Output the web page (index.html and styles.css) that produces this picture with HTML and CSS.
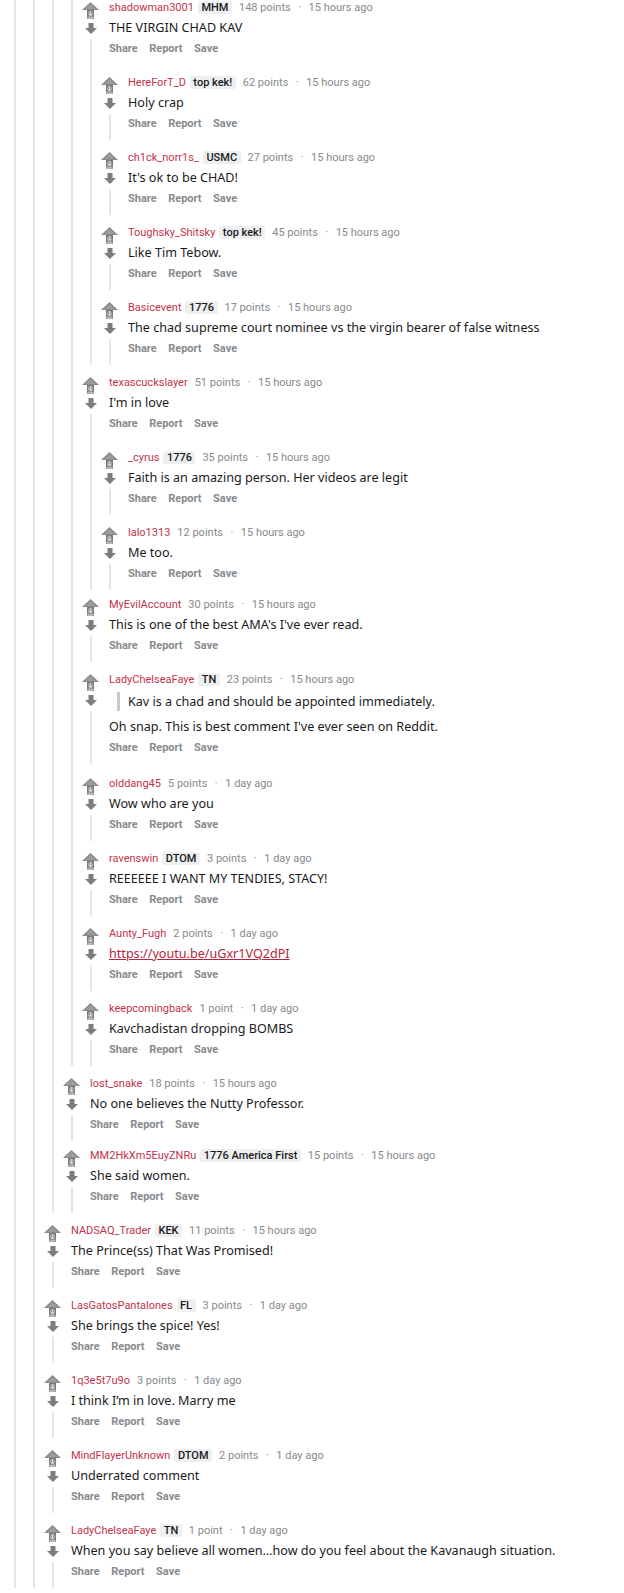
FILE: index.html
```html
<!DOCTYPE html>
<html lang="en">
<head>
  <meta charset="UTF-8" />
  <title>Comments</title>
  <link rel="stylesheet" href="styles.css">
</head>
<body>

<svg class="defs" width="0" height="0">
  <symbol id="up" viewBox="0 0 17 17">
    <polygon points="8.5,0 17,8 0,8" fill="#8a8a8a" />
    <polygon points="8.5,2 14,7 3,7" fill="#9c9c9c" />
    <rect x="5" y="8" width="7" height="9" fill="#7a7a7a" />
    <ellipse cx="8.5" cy="11.5" rx="2.2" ry="2.6" fill="#d4d4d4" />
    <rect x="7" y="10.6" width="1" height="1" fill="#555" />
    <rect x="9.2" y="10.6" width="1" height="1" fill="#555" />
    <rect x="5.5" y="14.5" width="6" height="2.5" fill="#b5b5b5" />
  </symbol>
  <symbol id="down" viewBox="0 0 12 11">
    <path d="M3.5 0h5v5h3.5l-6 6-6-6h3.5z" fill="#7d7d7d" />
  </symbol>
</svg>

<div class="thread">
  <div class="comment cut">
    <div class="rail"><div class="line"></div></div>
    <div class="content">
      <div class="children">

        <div class="comment cut">
          <div class="rail"><div class="line"></div></div>
          <div class="content">
            <div class="children">

              <div class="comment cut">
                <div class="rail"><div class="line"></div></div>
                <div class="content">
                  <div class="children">

                    <div class="comment cut">
                      <div class="rail"><div class="line"></div></div>
                      <div class="content">
                        <div class="children">

                          <!-- shadowman3001 -->
                          <div class="comment">
                            <div class="rail">
                              <svg class="up"><use href="#up"></use></svg>
                              <svg class="down"><use href="#down"></use></svg>
                              <div class="line"></div>
                            </div>
                            <div class="content">
                              <div class="meta"><span class="author">shadowman3001</span><span class="flair">MHM</span><span class="score">148 points</span><span class="dot">·</span><span>15 hours ago</span></div>
                              <div class="body"><p>THE VIRGIN CHAD KAV</p></div>
                              <div class="actions"><span>Share</span><span>Report</span><span>Save</span></div>
                              <div class="children">

                                <div class="comment">
                                  <div class="rail">
                                    <svg class="up"><use href="#up"></use></svg>
                                    <svg class="down"><use href="#down"></use></svg>
                                    <div class="line"></div>
                                  </div>
                                  <div class="content">
                                    <div class="meta"><span class="author">HereForT_D</span><span class="flair">top kek!</span><span class="score">62 points</span><span class="dot">·</span><span>15 hours ago</span></div>
                                    <div class="body"><p>Holy crap</p></div>
                                    <div class="actions"><span>Share</span><span>Report</span><span>Save</span></div>
                                  </div>
                                </div>

                                <div class="comment">
                                  <div class="rail">
                                    <svg class="up"><use href="#up"></use></svg>
                                    <svg class="down"><use href="#down"></use></svg>
                                    <div class="line"></div>
                                  </div>
                                  <div class="content">
                                    <div class="meta"><span class="author">ch1ck_norr1s_</span><span class="flair">USMC</span><span class="score">27 points</span><span class="dot">·</span><span>15 hours ago</span></div>
                                    <div class="body"><p>It's ok to be CHAD!</p></div>
                                    <div class="actions"><span>Share</span><span>Report</span><span>Save</span></div>
                                  </div>
                                </div>

                                <div class="comment">
                                  <div class="rail">
                                    <svg class="up"><use href="#up"></use></svg>
                                    <svg class="down"><use href="#down"></use></svg>
                                    <div class="line"></div>
                                  </div>
                                  <div class="content">
                                    <div class="meta"><span class="author">Toughsky_Shitsky</span><span class="flair">top kek!</span><span class="score">45 points</span><span class="dot">·</span><span>15 hours ago</span></div>
                                    <div class="body"><p>Like Tim Tebow.</p></div>
                                    <div class="actions"><span>Share</span><span>Report</span><span>Save</span></div>
                                  </div>
                                </div>

                                <div class="comment">
                                  <div class="rail">
                                    <svg class="up"><use href="#up"></use></svg>
                                    <svg class="down"><use href="#down"></use></svg>
                                    <div class="line"></div>
                                  </div>
                                  <div class="content">
                                    <div class="meta"><span class="author">Basicevent</span><span class="flair">1776</span><span class="score">17 points</span><span class="dot">·</span><span>15 hours ago</span></div>
                                    <div class="body"><p>The chad supreme court nominee vs the virgin bearer of false witness</p></div>
                                    <div class="actions"><span>Share</span><span>Report</span><span>Save</span></div>
                                  </div>
                                </div>

                              </div>
                            </div>
                          </div>

                          <!-- texascuckslayer -->
                          <div class="comment">
                            <div class="rail">
                              <svg class="up"><use href="#up"></use></svg>
                              <svg class="down"><use href="#down"></use></svg>
                              <div class="line"></div>
                            </div>
                            <div class="content">
                              <div class="meta"><span class="author">texascuckslayer</span><span class="score">51 points</span><span class="dot">·</span><span>15 hours ago</span></div>
                              <div class="body"><p>I'm in love</p></div>
                              <div class="actions"><span>Share</span><span>Report</span><span>Save</span></div>
                              <div class="children">

                                <div class="comment">
                                  <div class="rail">
                                    <svg class="up"><use href="#up"></use></svg>
                                    <svg class="down"><use href="#down"></use></svg>
                                    <div class="line"></div>
                                  </div>
                                  <div class="content">
                                    <div class="meta"><span class="author">_cyrus</span><span class="flair">1776</span><span class="score">35 points</span><span class="dot">·</span><span>15 hours ago</span></div>
                                    <div class="body"><p>Faith is an amazing person. Her videos are legit</p></div>
                                    <div class="actions"><span>Share</span><span>Report</span><span>Save</span></div>
                                  </div>
                                </div>

                                <div class="comment">
                                  <div class="rail">
                                    <svg class="up"><use href="#up"></use></svg>
                                    <svg class="down"><use href="#down"></use></svg>
                                    <div class="line"></div>
                                  </div>
                                  <div class="content">
                                    <div class="meta"><span class="author">lalo1313</span><span class="score">12 points</span><span class="dot">·</span><span>15 hours ago</span></div>
                                    <div class="body"><p>Me too.</p></div>
                                    <div class="actions"><span>Share</span><span>Report</span><span>Save</span></div>
                                  </div>
                                </div>

                              </div>
                            </div>
                          </div>

                          <div class="comment tight">
                            <div class="rail">
                              <svg class="up"><use href="#up"></use></svg>
                              <svg class="down"><use href="#down"></use></svg>
                              <div class="line"></div>
                            </div>
                            <div class="content">
                              <div class="meta"><span class="author">MyEvilAccount</span><span class="score">30 points</span><span class="dot">·</span><span>15 hours ago</span></div>
                              <div class="body"><p>This is one of the best AMA's I've ever read.</p></div>
                              <div class="actions"><span>Share</span><span>Report</span><span>Save</span></div>
                            </div>
                          </div>

                          <div class="comment quoted">
                            <div class="rail">
                              <svg class="up"><use href="#up"></use></svg>
                              <svg class="down"><use href="#down"></use></svg>
                              <div class="line"></div>
                            </div>
                            <div class="content">
                              <div class="meta"><span class="author">LadyChelseaFaye</span><span class="flair">TN</span><span class="score">23 points</span><span class="dot">·</span><span>15 hours ago</span></div>
                              <div class="body">
                                <blockquote><p>Kav is a chad and should be appointed immediately.</p></blockquote>
                                <p>Oh snap. This is best comment I've ever seen on Reddit.</p>
                              </div>
                              <div class="actions"><span>Share</span><span>Report</span><span>Save</span></div>
                            </div>
                          </div>

                          <div class="comment">
                            <div class="rail">
                              <svg class="up"><use href="#up"></use></svg>
                              <svg class="down"><use href="#down"></use></svg>
                              <div class="line"></div>
                            </div>
                            <div class="content">
                              <div class="meta"><span class="author">olddang45</span><span class="score">5 points</span><span class="dot">·</span><span>1 day ago</span></div>
                              <div class="body"><p>Wow who are you</p></div>
                              <div class="actions"><span>Share</span><span>Report</span><span>Save</span></div>
                            </div>
                          </div>

                          <div class="comment">
                            <div class="rail">
                              <svg class="up"><use href="#up"></use></svg>
                              <svg class="down"><use href="#down"></use></svg>
                              <div class="line"></div>
                            </div>
                            <div class="content">
                              <div class="meta"><span class="author">ravenswin</span><span class="flair">DTOM</span><span class="score">3 points</span><span class="dot">·</span><span>1 day ago</span></div>
                              <div class="body"><p>REEEEEE I WANT MY TENDIES, STACY!</p></div>
                              <div class="actions"><span>Share</span><span>Report</span><span>Save</span></div>
                            </div>
                          </div>

                          <div class="comment">
                            <div class="rail">
                              <svg class="up"><use href="#up"></use></svg>
                              <svg class="down"><use href="#down"></use></svg>
                              <div class="line"></div>
                            </div>
                            <div class="content">
                              <div class="meta"><span class="author">Aunty_Fugh</span><span class="score">2 points</span><span class="dot">·</span><span>1 day ago</span></div>
                              <div class="body"><p><a class="link" href="#">https://youtu.be/uGxr1VQ2dPI</a></p></div>
                              <div class="actions"><span>Share</span><span>Report</span><span>Save</span></div>
                            </div>
                          </div>

                          <div class="comment">
                            <div class="rail">
                              <svg class="up"><use href="#up"></use></svg>
                              <svg class="down"><use href="#down"></use></svg>
                              <div class="line"></div>
                            </div>
                            <div class="content">
                              <div class="meta"><span class="author">keepcomingback</span><span class="score">1 point</span><span class="dot">·</span><span>1 day ago</span></div>
                              <div class="body"><p>Kavchadistan dropping BOMBS</p></div>
                              <div class="actions"><span>Share</span><span>Report</span><span>Save</span></div>
                            </div>
                          </div>

                        </div>
                      </div>
                    </div>

                    <div class="comment">
                      <div class="rail">
                        <svg class="up"><use href="#up"></use></svg>
                        <svg class="down"><use href="#down"></use></svg>
                        <div class="line"></div>
                      </div>
                      <div class="content">
                        <div class="meta"><span class="author">lost_snake</span><span class="score">18 points</span><span class="dot">·</span><span>15 hours ago</span></div>
                        <div class="body"><p>No one believes the Nutty Professor.</p></div>
                        <div class="actions"><span>Share</span><span>Report</span><span>Save</span></div>
                      </div>
                    </div>

                    <div class="comment tight">
                      <div class="rail">
                        <svg class="up"><use href="#up"></use></svg>
                        <svg class="down"><use href="#down"></use></svg>
                        <div class="line"></div>
                      </div>
                      <div class="content">
                        <div class="meta"><span class="author">MM2HkXm5EuyZNRu</span><span class="flair">1776 America First</span><span class="score">15 points</span><span class="dot">·</span><span>15 hours ago</span></div>
                        <div class="body"><p>She said women.</p></div>
                        <div class="actions"><span>Share</span><span>Report</span><span>Save</span></div>
                      </div>
                    </div>

                  </div>
                </div>
              </div>

              <div class="comment">
                <div class="rail">
                  <svg class="up"><use href="#up"></use></svg>
                  <svg class="down"><use href="#down"></use></svg>
                  <div class="line"></div>
                </div>
                <div class="content">
                  <div class="meta"><span class="author">NADSAQ_Trader</span><span class="flair">KEK</span><span class="score">11 points</span><span class="dot">·</span><span>15 hours ago</span></div>
                  <div class="body"><p>The Prince(ss) That Was Promised!</p></div>
                  <div class="actions"><span>Share</span><span>Report</span><span>Save</span></div>
                </div>
              </div>

              <div class="comment">
                <div class="rail">
                  <svg class="up"><use href="#up"></use></svg>
                  <svg class="down"><use href="#down"></use></svg>
                  <div class="line"></div>
                </div>
                <div class="content">
                  <div class="meta"><span class="author">LasGatosPantalones</span><span class="flair">FL</span><span class="score">3 points</span><span class="dot">·</span><span>1 day ago</span></div>
                  <div class="body"><p>She brings the spice! Yes!</p></div>
                  <div class="actions"><span>Share</span><span>Report</span><span>Save</span></div>
                </div>
              </div>

              <div class="comment">
                <div class="rail">
                  <svg class="up"><use href="#up"></use></svg>
                  <svg class="down"><use href="#down"></use></svg>
                  <div class="line"></div>
                </div>
                <div class="content">
                  <div class="meta"><span class="author">1q3e5t7u9o</span><span class="score">3 points</span><span class="dot">·</span><span>1 day ago</span></div>
                  <div class="body"><p>I think I’m in love. Marry me</p></div>
                  <div class="actions"><span>Share</span><span>Report</span><span>Save</span></div>
                </div>
              </div>

              <div class="comment">
                <div class="rail">
                  <svg class="up"><use href="#up"></use></svg>
                  <svg class="down"><use href="#down"></use></svg>
                  <div class="line"></div>
                </div>
                <div class="content">
                  <div class="meta"><span class="author">MindFlayerUnknown</span><span class="flair">DTOM</span><span class="score">2 points</span><span class="dot">·</span><span>1 day ago</span></div>
                  <div class="body"><p>Underrated comment</p></div>
                  <div class="actions"><span>Share</span><span>Report</span><span>Save</span></div>
                </div>
              </div>

              <div class="comment">
                <div class="rail">
                  <svg class="up"><use href="#up"></use></svg>
                  <svg class="down"><use href="#down"></use></svg>
                  <div class="line"></div>
                </div>
                <div class="content">
                  <div class="meta"><span class="author">LadyChelseaFaye</span><span class="flair">TN</span><span class="score">1 point</span><span class="dot">·</span><span>1 day ago</span></div>
                  <div class="body"><p>When you say believe all women…how do you feel about the Kavanaugh situation.</p></div>
                  <div class="actions"><span>Share</span><span>Report</span><span>Save</span></div>
                </div>
              </div>

            </div>
          </div>
        </div>

      </div>
    </div>
  </div>
</div>

</body>
</html>
```

FILE: styles.css
```css
body {
  margin: 0;
  background: #fff;
  color: #1a1a1b;
  font-family: "Noto Sans", sans-serif;
}

.defs {
  position: absolute;
  width: 0;
  height: 0;
}

.thread {
  padding-left: 5px;
}

.comment {
  display: flex;
}

.comment.tight {
  margin-top: -3px;
}

.comment.quoted {
  margin-bottom: 2px;
}

.rail {
  flex: none;
  width: 19px;
  padding-top: 2px;
  display: flex;
  flex-direction: column;
  align-items: center;
}

.rail .up {
  width: 17px;
  height: 17px;
}

.rail .down {
  width: 12px;
  height: 11px;
  margin-top: 4px;
}

.line {
  flex: 1;
  align-self: flex-start;
  width: 2px;
  margin: 5px 0 0 9px;
  background: #e6e6e6;
}

.cut > .rail {
  padding-top: 0;
}

.cut > .rail .line {
  margin-top: 0;
}

.content {
  flex: 1;
  min-width: 0;
  margin-left: 9px;
}

.children {
  display: flex;
  flex-direction: column;
  gap: 10px;
  margin: 10px 0 0 -9px;
}

.cut > .content > .children {
  margin-top: 0;
}

/* author line */
.meta {
  font-family: Roboto, sans-serif;
  font-size: 11px;
  line-height: 16px;
  height: 16px;
  color: #878a8c;
  white-space: nowrap;
}

.author {
  color: #c1334b;
  margin-right: 4px;
}

.flair {
  display: inline-block;
  background: #edeff1;
  color: #1a1a1b;
  font-weight: 500;
  line-height: 13px;
  padding: 0 3.5px;
  border-radius: 2px;
  margin-right: 4px;
}

.score {
  margin-left: 3px;
}

.dot {
  margin: 0 7.5px;
}

.body {
  margin-top: 2px;
  font-size: 12.6px;
  line-height: 20px;
}

.body p {
  margin: 0;
}

.body blockquote {
  margin: 4px 0 6px 8px;
  padding-left: 8px;
  border-left: 3px solid #c8c8c8;
  line-height: 19px;
}

.body blockquote ~ p {
  margin-bottom: 1px;
}

.link {
  color: #b4263c;
  text-decoration: underline;
}

.actions {
  display: flex;
  gap: 11.5px;
  margin-top: 3px;
  padding-bottom: 8px;
  font-family: Roboto, sans-serif;
  font-size: 11px;
  font-weight: 700;
  line-height: 16px;
  color: #878a8c;
}
```
